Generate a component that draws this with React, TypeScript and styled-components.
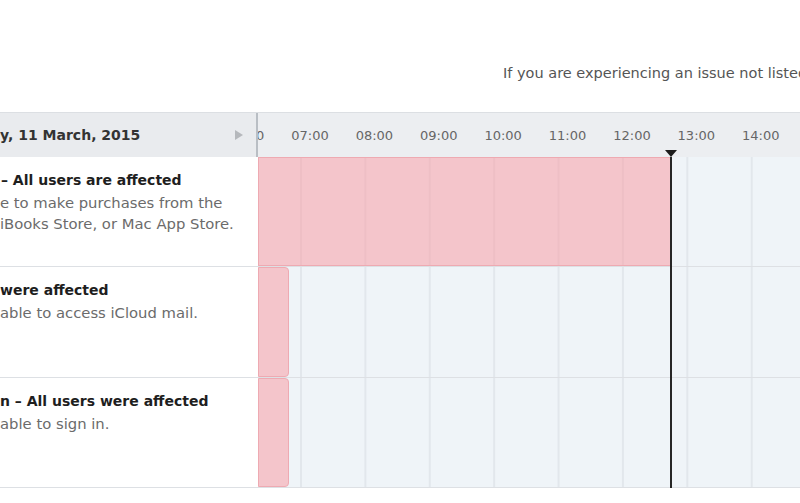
import React from "react";
import styled, { createGlobalStyle } from "styled-components";

const GlobalStyle = createGlobalStyle`
  html, body { margin: 0; padding: 0; background: #ffffff; }
  body { font-family: "DejaVu Sans", "Liberation Sans", sans-serif; overflow: hidden; width: 800px; height: 503px; }
`;

const LEFT_W = 258;
const HOUR_W = 64.4;
const FIRST_LINE = 43; // x offset (relative to track) of the 07:00 grid line
const NOW_X = 413; // relative to track

const Page = styled.div`
  width: 800px;
  height: 503px;
  overflow: hidden;
`;

const Notice = styled.div`
  height: 112px;
  box-sizing: border-box;
  padding: 65px 0 0 503px;
  font-size: 14.5px;
  color: #555;
  white-space: nowrap;
  overflow: hidden;
`;

const Table = styled.div`
  position: relative;
  display: flex;
  flex-direction: column;
`;

const HeaderRow = styled.div`
  display: grid;
  grid-template-columns: ${LEFT_W}px 1fr;
  height: 45px;
  border-top: 1px solid #dcdfe3;
  box-sizing: border-box;
`;

const DateCell = styled.div`
  display: flex;
  align-items: center;
  justify-content: space-between;
  padding: 0 13px 0 0;
  background: #e9ebee;
  border-right: 2px solid #b9bec4;
  font-size: 14px;
  font-weight: bold;
  color: #333;
  white-space: nowrap;
  overflow: hidden;
`;

const Arrow = styled.span`
  width: 0;
  height: 0;
  border-top: 5px solid transparent;
  border-bottom: 5px solid transparent;
  border-left: 8px solid #b5b8bc;
`;

const HoursCell = styled.div`
  display: flex;
  align-items: center;
  background: #eceef1;
  overflow: hidden;
`;

const HourStrip = styled.div`
  display: flex;
  flex: none;
`;

const HourLabel = styled.span`
  flex: 0 0 ${HOUR_W}px;
  text-align: center;
  font-size: 13px;
  color: #666;
`;

const BodyRow = styled.div`
  display: grid;
  grid-template-columns: ${LEFT_W}px 1fr;
  height: 110.33px;
  box-sizing: border-box;
  border-bottom: 1px solid #dde0e4;
`;

const InfoCell = styled.div`
  padding: 13px 0 0 0;
  background: #fff;
  white-space: nowrap;
  overflow: hidden;
`;

const Title = styled.div<{ $indent: number }>`
  font-size: 14px;
  font-weight: bold;
  color: #1e1e1e;
  line-height: 20px;
  padding-left: ${(p) => p.$indent}px;
`;

const Desc = styled.div`
  font-size: 14.8px;
  color: #6b6b6b;
  line-height: 21px;
  margin-top: 2px;
  & + & {
    margin-top: 0;
  }
`;

const Track = styled.div`
  position: relative;
  background-color: #eff4f8;
  background-image: linear-gradient(to right, #e2e7ec 0 2px, transparent 2px);
  background-size: ${HOUR_W}px 100%;
  background-position: ${FIRST_LINE - 1}px 0;
  overflow: hidden;
`;

const Bar = styled.div<{ $rounded: boolean }>`
  position: absolute;
  top: 0;
  bottom: 0;
  box-sizing: border-box;
  background: rgba(247, 158, 166, 0.55);
  border: 1px solid #eeaab2;
  border-radius: ${(p) => (p.$rounded ? "0 4px 4px 0" : "0")};
`;

const NowLine = styled.div`
  position: absolute;
  left: ${LEFT_W + NOW_X - 1}px;
  top: 45px;
  bottom: 0;
  width: 2px;
  background: #262626;
  &::before {
    content: "";
    position: absolute;
    left: -5px;
    top: -7px;
    border-left: 6px solid transparent;
    border-right: 6px solid transparent;
    border-top: 7px solid #1c1c1c;
  }
`;

type Incident = {
  title: string;
  indent: number;
  lines: string[];
  start: number;
  end: number;
  rounded: boolean;
};

const incidents: Incident[] = [
  {
    title: "– All users are affected",
    indent: 1,
    lines: ["e to make purchases from the", "iBooks Store, or Mac App Store."],
    start: 0,
    end: NOW_X,
    rounded: false,
  },
  {
    title: "were affected",
    indent: 0,
    lines: ["able to access iCloud mail."],
    start: 0,
    end: 31,
    rounded: true,
  },
  {
    title: "n – All users were affected",
    indent: 0,
    lines: ["able to sign in."],
    start: 0,
    end: 31,
    rounded: true,
  },
];

const hours = ["06:00", "07:00", "08:00", "09:00", "10:00", "11:00", "12:00", "13:00", "14:00", "15:00"];

export default function App() {
  return (
    <Page>
      <GlobalStyle />
      <Notice>If you are experiencing an issue not listed here, contact support.</Notice>
      <Table>
        <HeaderRow>
          <DateCell>
            <span>y, 11 March, 2015</span>
            <Arrow />
          </DateCell>
          <HoursCell>
            <HourStrip style={{ marginLeft: FIRST_LINE + 9 - HOUR_W * 1.5 }}>
              {hours.map((h) => (
                <HourLabel key={h}>{h}</HourLabel>
              ))}
            </HourStrip>
          </HoursCell>
        </HeaderRow>
        {incidents.map((inc, i) => (
          <BodyRow key={i}>
            <InfoCell>
              <Title $indent={inc.indent}>{inc.title}</Title>
              {inc.lines.map((l) => (
                <Desc key={l}>{l}</Desc>
              ))}
            </InfoCell>
            <Track>
              <Bar $rounded={inc.rounded} style={{ left: inc.start, width: inc.end - inc.start }} />
            </Track>
          </BodyRow>
        ))}
        <NowLine />
      </Table>
    </Page>
  );
}
